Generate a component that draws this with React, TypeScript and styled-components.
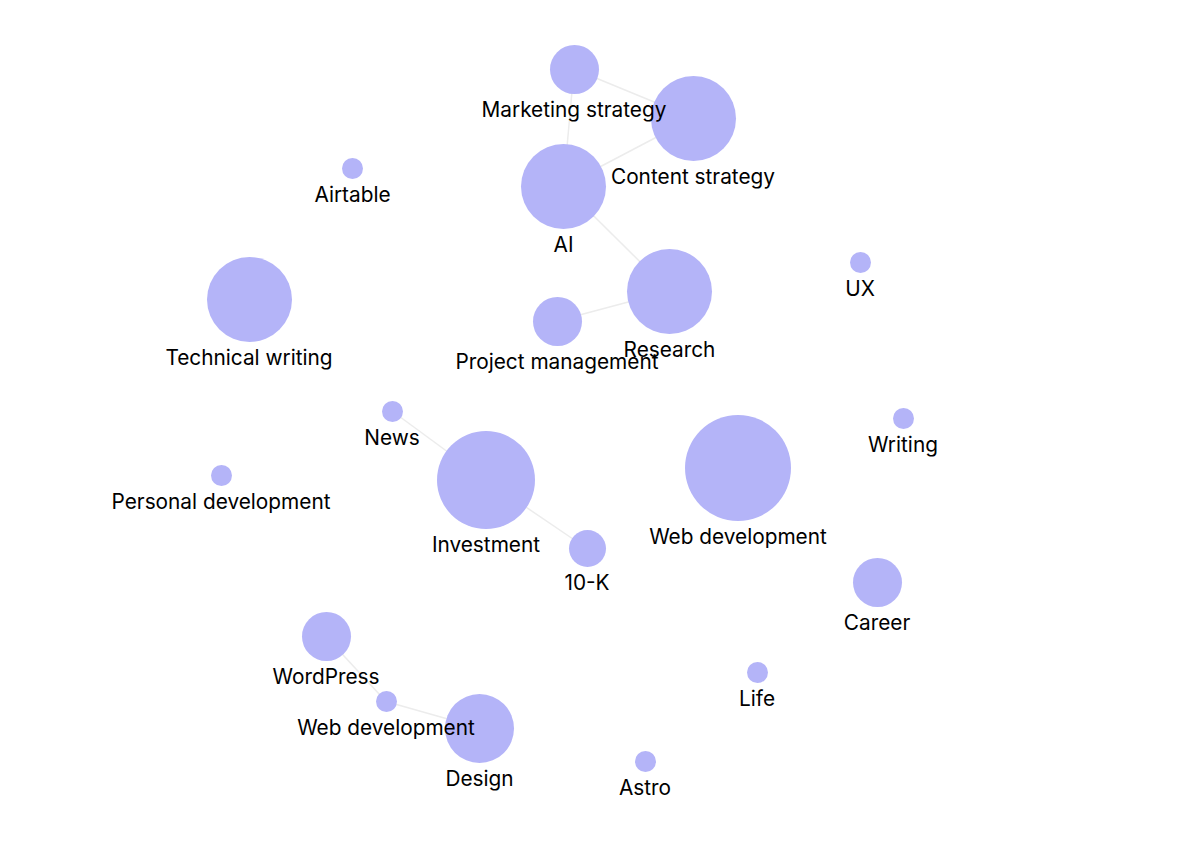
import styled, { createGlobalStyle } from "styled-components";

const GlobalStyle = createGlobalStyle`
  html, body {
    margin: 0;
    padding: 0;
    background: #ffffff;
  }
  body {
    font-family: Inter, "Noto Sans", sans-serif;
    color: #000000;
  }
`;

const Canvas = styled.div`
  position: relative;
  width: 100vw;
  height: 100vh;
  overflow: hidden;
  background: #ffffff;
`;

const EdgeLayer = styled.svg`
  position: absolute;
  inset: 0;
  width: 100%;
  height: 100%;
`;

const Bubble = styled.div<{ $r: number }>`
  position: absolute;
  width: ${(p) => p.$r * 2}px;
  height: ${(p) => p.$r * 2}px;
  margin-left: ${(p) => -p.$r}px;
  margin-top: ${(p) => -p.$r}px;
  border-radius: 50%;
  background: #b4b4f8;
`;

const Label = styled.span`
  position: absolute;
  transform: translateX(-50%);
  font-size: 20.8px;
  line-height: 24px;
  white-space: nowrap;
  color: #000000;
`;

type Topic = { id: string; name: string; x: number; y: number; r: number };

const topics: Topic[] = [
  { id: "marketing", name: "Marketing strategy", x: 574, y: 69, r: 24.5 },
  { id: "content", name: "Content strategy", x: 693, y: 118, r: 42.5 },
  { id: "ai", name: "AI", x: 563.5, y: 186, r: 42.5 },
  { id: "airtable", name: "Airtable", x: 352.5, y: 168, r: 10.5 },
  { id: "techwriting", name: "Technical writing", x: 249, y: 299, r: 42.5 },
  { id: "research", name: "Research", x: 669.5, y: 291, r: 42.5 },
  { id: "pm", name: "Project management", x: 557, y: 321, r: 24.5 },
  { id: "ux", name: "UX", x: 860, y: 262, r: 10.5 },
  { id: "news", name: "News", x: 392, y: 411, r: 10.5 },
  { id: "writing", name: "Writing", x: 903, y: 418, r: 10.5 },
  { id: "personal", name: "Personal development", x: 221, y: 475, r: 10.5 },
  { id: "investment", name: "Investment", x: 486, y: 480, r: 49 },
  { id: "webdev", name: "Web development", x: 738, y: 468, r: 53 },
  { id: "tenk", name: "10-K", x: 587, y: 548.5, r: 18.5 },
  { id: "career", name: "Career", x: 877, y: 582, r: 24.5 },
  { id: "wordpress", name: "WordPress", x: 326, y: 636.5, r: 24.5 },
  { id: "life", name: "Life", x: 757, y: 672, r: 10.5 },
  { id: "webdev2", name: "Web development", x: 386, y: 701.5, r: 10.5 },
  { id: "design", name: "Design", x: 479.5, y: 728, r: 34.5 },
  { id: "astro", name: "Astro", x: 645, y: 761, r: 10.5 },
];

const links: [string, string][] = [
  ["marketing", "content"],
  ["marketing", "ai"],
  ["ai", "content"],
  ["ai", "research"],
  ["research", "pm"],
  ["news", "investment"],
  ["investment", "tenk"],
  ["wordpress", "webdev2"],
  ["webdev2", "design"],
];

const byId = (id: string) => topics.find((t) => t.id === id)!;

export default function App() {
  return (
    <>
      <GlobalStyle />
      <Canvas>
        <EdgeLayer>
          {links.map(([a, b]) => {
            const s = byId(a);
            const t = byId(b);
            return (
              <line
                key={a + b}
                x1={s.x}
                y1={s.y}
                x2={t.x}
                y2={t.y}
                stroke="#ececec"
                strokeWidth={1.5}
              />
            );
          })}
        </EdgeLayer>
        {topics.map((t) => (
          <Bubble key={t.id} $r={t.r} style={{ left: t.x, top: t.y }} />
        ))}
        {topics.map((t) => (
          <Label key={t.id} style={{ left: t.x, top: t.y + t.r + 4 }}>
            {t.name}
          </Label>
        ))}
      </Canvas>
    </>
  );
}
